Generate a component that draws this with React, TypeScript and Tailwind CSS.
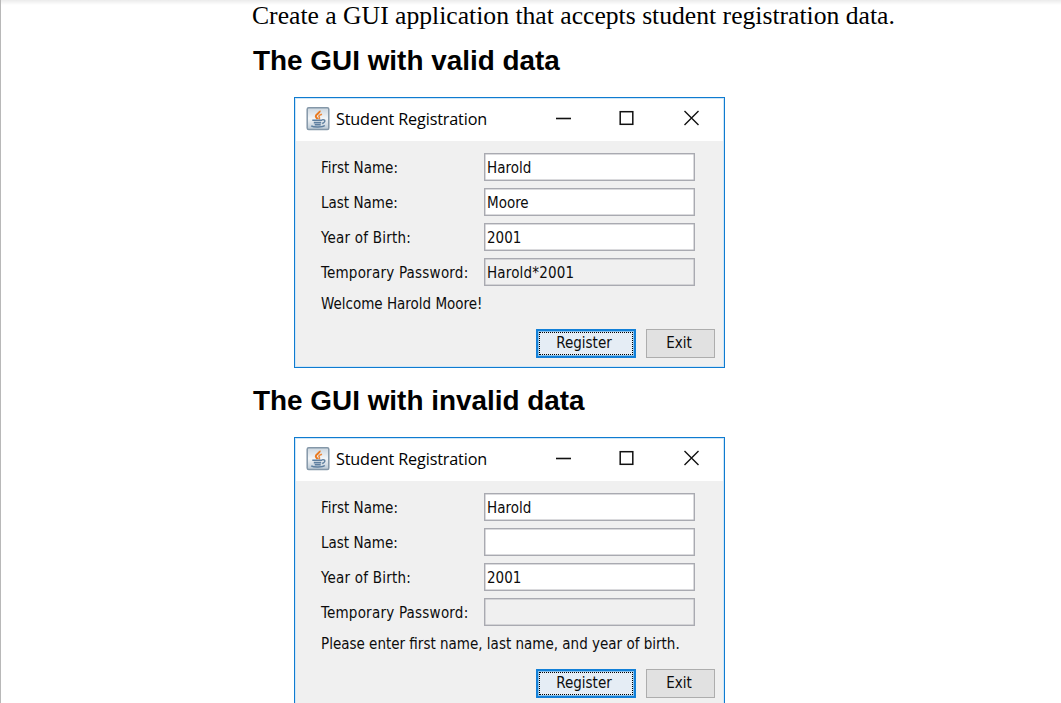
type Registration = {
  heading: string;
  first: string;
  last: string;
  year: string;
  password: string;
  message: string;
};

const examples: Registration[] = [
  {
    heading: "The GUI with valid data",
    first: "Harold",
    last: "Moore",
    year: "2001",
    password: "Harold*2001",
    message: "Welcome Harold Moore!",
  },
  {
    heading: "The GUI with invalid data",
    first: "Harold",
    last: "",
    year: "2001",
    password: "",
    message: "Please enter first name, last name, and year of birth.",
  },
];

function JavaIcon() {
  return (
    <svg width="24" height="24" viewBox="0 0 24 24" fill="none">
      <defs>
        <linearGradient id="tile" x1="0" y1="0" x2="0" y2="1">
          <stop offset="0" stopColor="#ccd6df" />
          <stop offset="0.5" stopColor="#f3f6f8" />
          <stop offset="1" stopColor="#bac8d4" />
        </linearGradient>
      </defs>
      <rect x="1.2" y="0.8" width="21.6" height="21.6" rx="1.5" fill="url(#tile)" stroke="#8497a8" strokeWidth="1.5" />
      <path d="M13.8 3.8c.6 2.3-4.4 3.2-4 5.6.2 1.2 1.4 1.7 1.8 2.8" stroke="#e97a20" strokeWidth="2" />
      <path d="M16 7.2c-2.6.8-3.7 1.7-2.8 2.9.6.8.6 1.4-.5 2.3" stroke="#ee8a3c" strokeWidth="1.6" />
      <path d="M6.3 13.2h9.8M7.8 15.6h7.4M8.7 17.8h6" stroke="#5e7f9f" strokeWidth="1.6" />
      <path d="M16 12.9c3.6-.7 3.9 2.2.2 3.6" stroke="#5e7f9f" strokeWidth="1.4" />
      <path d="M5.2 18.8c2.5 1.8 11 1.7 13.6-.3" stroke="#5e7f9f" strokeWidth="1.5" />
    </svg>
  );
}

function TitleBar() {
  return (
    <div className="flex h-[42px] items-center bg-white pb-[3px] pl-[10px] pr-[22px]">
      <JavaIcon />
      <span className="ml-[6px] flex-1 whitespace-nowrap pt-px font-['Open_Sans',sans-serif] text-[16.2px] leading-[22px] tracking-[-0.15px] text-black">
        Student Registration
      </span>
      <svg width="146" height="20" viewBox="0 0 146 20" fill="none" stroke="#111111">
        <path d="M1 9.5h15" strokeWidth="1.6" />
        <rect x="65.2" y="2.7" width="12.6" height="12.6" strokeWidth="1.5" />
        <path d="M129.5 2l14 14M143.5 2l-14 14" strokeWidth="1.4" />
      </svg>
    </div>
  );
}

type FieldProps = { label: string; value: string; disabled?: boolean; spaced?: boolean };

function Field({ label, value, disabled, spaced }: FieldProps) {
  return (
    <div className="flex h-[28px] items-center leading-[20px]">
      <span className={`w-[163px] whitespace-nowrap pt-[2px] ${spaced ? "tracking-[0.23px]" : ""}`}>{label}</span>
      <div
        className={`flex h-[28px] w-[211px] items-center border border-[#a9aab1] pl-[2px] pt-[2px] shadow-[inset_0_0_0_0.5px_#b5b6bc] ${
          disabled ? "bg-[#f0f0f0] tracking-[0.17px]" : "bg-white"
        }`}
      >
        {value}
      </div>
    </div>
  );
}

function RegistrationWindow({ data }: { data: Registration }) {
  return (
    <section className="h-[271px] w-[431px] border border-[#0f7bd0] bg-[#f0f0f0] font-['DejaVu_Sans_Condensed','DejaVu_Sans',sans-serif] text-[15px] leading-[20px] text-[#0c0c0c] shadow-[inset_0_0_0_1px_#cfe6f7]">
      <div className="px-px pt-px">
        <TitleBar />
      </div>
      <div className="flex flex-col gap-[7px] pl-[26px] pt-[12px]">
        <Field label="First Name:" value={data.first} />
        <Field label="Last Name:" value={data.last} />
        <Field label="Year of Birth:" value={data.year} spaced />
        <Field label="Temporary Password:" value={data.password} disabled spaced />
        <p className="whitespace-nowrap pt-px">{data.message}</p>
      </div>
      <div className="mt-[15px] flex justify-end gap-[10px] pr-[9px]">
        <button className="h-[29px] w-[100px] border-2 border-[#1280d8] bg-[#8dc3ec] p-px">
          <span className="flex h-full items-center justify-center border border-dotted border-black bg-[#e5edf5] pb-[2px] pr-[4px]">
            Register
          </span>
        </button>
        <button className="flex h-[29px] w-[69px] items-center justify-center border border-[#adadad] bg-[#e1e1e1] pb-[2px] pr-[3px]">
          Exit
        </button>
      </div>
    </section>
  );
}

export default function App() {
  return (
    <main className="h-[703px] w-[1061px] overflow-hidden border-l border-[#b8b8b8] bg-white text-black">
      <div className="h-[5px] bg-linear-to-b from-[#ebebeb] to-white" />
      <div className="pl-[251px]">
        <p className="h-[37px] whitespace-nowrap font-['Liberation_Serif',serif] text-[25.65px] leading-[22px]">
          Create a GUI application that accepts student registration data.
        </p>
        {examples.map((data) => (
          <div key={data.heading} className="h-[340px]">
            <h1 className="h-[55px] whitespace-nowrap pl-px font-['Liberation_Sans',sans-serif] text-[27.9px] font-bold leading-[38px]">
              {data.heading}
            </h1>
            <div className="pl-[42px]">
              <RegistrationWindow data={data} />
            </div>
          </div>
        ))}
      </div>
    </main>
  );
}
